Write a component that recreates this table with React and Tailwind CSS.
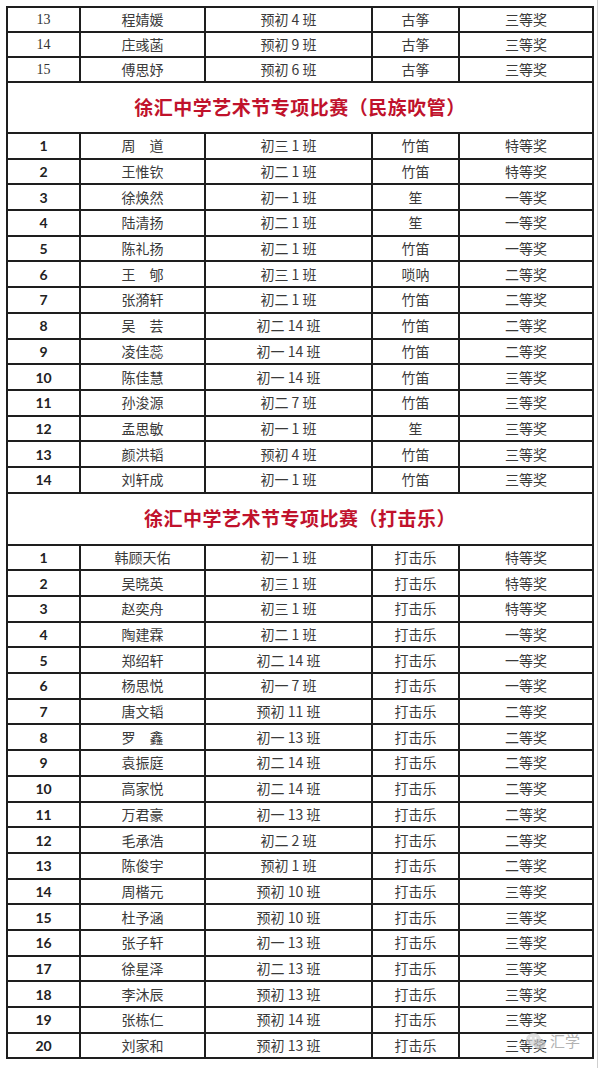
import React from 'react'

const cjk = "font-['Noto_Sans_CJK_SC',sans-serif]"

const topRows = [
  ['13', '程婧媛', '预初 4 班', '古筝', '三等奖'],
  ['14', '庄彧菡', '预初 9 班', '古筝', '三等奖'],
  ['15', '傅思妤', '预初 6 班', '古筝', '三等奖'],
]

const windRows = [
  ['1', '周　道', '初三 1 班', '竹笛', '特等奖'],
  ['2', '王惟钦', '初二 1 班', '竹笛', '特等奖'],
  ['3', '徐焕然', '初一 1 班', '笙', '一等奖'],
  ['4', '陆清扬', '初二 1 班', '笙', '一等奖'],
  ['5', '陈礼扬', '初二 1 班', '竹笛', '一等奖'],
  ['6', '王　郇', '初三 1 班', '唢呐', '二等奖'],
  ['7', '张漪轩', '初二 1 班', '竹笛', '二等奖'],
  ['8', '吴　芸', '初二 14 班', '竹笛', '二等奖'],
  ['9', '凌佳蕊', '初一 14 班', '竹笛', '二等奖'],
  ['10', '陈佳慧', '初一 14 班', '竹笛', '三等奖'],
  ['11', '孙浚源', '初二 7 班', '竹笛', '三等奖'],
  ['12', '孟思敏', '初一 1 班', '笙', '三等奖'],
  ['13', '颜洪韬', '预初 4 班', '竹笛', '三等奖'],
  ['14', '刘轩成', '初一 1 班', '竹笛', '三等奖'],
]

const drumRows = [
  ['1', '韩顾天佑', '初一 1 班', '打击乐', '特等奖'],
  ['2', '吴晓英', '初三 1 班', '打击乐', '特等奖'],
  ['3', '赵奕舟', '初三 1 班', '打击乐', '特等奖'],
  ['4', '陶建霖', '初二 1 班', '打击乐', '一等奖'],
  ['5', '郑绍轩', '初二 14 班', '打击乐', '一等奖'],
  ['6', '杨思悦', '初一 7 班', '打击乐', '一等奖'],
  ['7', '唐文韬', '预初 11 班', '打击乐', '二等奖'],
  ['8', '罗　鑫', '初一 13 班', '打击乐', '二等奖'],
  ['9', '袁振庭', '初二 14 班', '打击乐', '二等奖'],
  ['10', '高家悦', '初二 14 班', '打击乐', '二等奖'],
  ['11', '万君豪', '初一 13 班', '打击乐', '二等奖'],
  ['12', '毛承浩', '初二 2 班', '打击乐', '二等奖'],
  ['13', '陈俊宇', '预初 1 班', '打击乐', '二等奖'],
  ['14', '周楷元', '预初 10 班', '打击乐', '三等奖'],
  ['15', '杜予涵', '预初 10 班', '打击乐', '三等奖'],
  ['16', '张子轩', '初一 13 班', '打击乐', '三等奖'],
  ['17', '徐星泽', '初二 13 班', '打击乐', '三等奖'],
  ['18', '李沐辰', '预初 13 班', '打击乐', '三等奖'],
  ['19', '张栋仁', '预初 14 班', '打击乐', '三等奖'],
  ['20', '刘家和', '预初 13 班', '打击乐', '三等奖'],
]

const cell = 'border-2 border-[#1e1e1e] text-center p-0 align-middle'

function Row({ row, serif, height }) {
  const [no, name, cls, item, prize] = row
  return (
    <tr className={height}>
      <td
        className={`${cell} text-[14px] ${
          serif
            ? "font-['Liberation_Serif',serif] text-[#333]"
            : "font-['Lato',sans-serif] font-bold text-[#222]"
        }`}
      >
        {no}
      </td>
      <td className={`${cell} ${cjk} text-[14px] text-[#3a3a3a]`}>{name}</td>
      <td className={`${cell} ${cjk} text-[14px] text-[#3a3a3a]`}>{cls}</td>
      <td className={`${cell} ${cjk} text-[14px] text-[#3a3a3a]`}>{item}</td>
      <td className={`${cell} ${cjk} text-[14px] text-[#3a3a3a]`}>{prize}</td>
    </tr>
  )
}

function Title({ children, height }) {
  return (
    <tr className={height}>
      <td
        colSpan={5}
        className={`${cell} ${cjk} text-[19px] font-bold text-[#c0122c] tracking-[0.5px]`}
      >
        {children}
      </td>
    </tr>
  )
}

export default function App() {
  return (
    <div className="relative h-[1068px] w-[598px] overflow-hidden border-r border-[#cfcfcf] bg-white pl-[6px] pt-[6px]">
      <table className="w-[586px] table-fixed border-collapse">
        <colgroup>
          <col className="w-[73px]" />
          <col className="w-[125px]" />
          <col className="w-[167px]" />
          <col className="w-[87px]" />
          <col className="w-[134px]" />
        </colgroup>
        <tbody>
          {topRows.map((row) => (
            <Row key={'t' + row[0]} row={row} serif height="h-[25px]" />
          ))}
          <Title height="h-[51px]">徐汇中学艺术节专项比赛（民族吹管）</Title>
          {windRows.map((row) => (
            <Row key={'w' + row[0]} row={row} height="h-[25.7px]" />
          ))}
          <Title height="h-[52px]">徐汇中学艺术节专项比赛（打击乐）</Title>
          {drumRows.map((row) => (
            <Row key={'d' + row[0]} row={row} height="h-[25.7px]" />
          ))}
        </tbody>
      </table>

      {/* watermark */}
      <svg
        className="absolute left-[525px] top-[1031px] opacity-70"
        width="22"
        height="22"
        viewBox="0 0 22 22"
      >
        <ellipse cx="8.5" cy="8.5" rx="7.5" ry="6.5" fill="#d4d4d4" />
        <ellipse cx="14.5" cy="13" rx="6" ry="5.2" fill="#bdbdbd" />
        <circle cx="6" cy="7" r="1" fill="#fff" />
        <circle cx="10.5" cy="7" r="1" fill="#fff" />
        <circle cx="12.5" cy="12.5" r="0.8" fill="#fff" />
        <circle cx="16.5" cy="12.5" r="0.8" fill="#fff" />
      </svg>
      <span
        className={`absolute left-[550px] top-[1031px] ${cjk} text-[15px] leading-[20px] text-[#a0a0a0] opacity-80`}
      >
        汇学
      </span>
    </div>
  )
}
